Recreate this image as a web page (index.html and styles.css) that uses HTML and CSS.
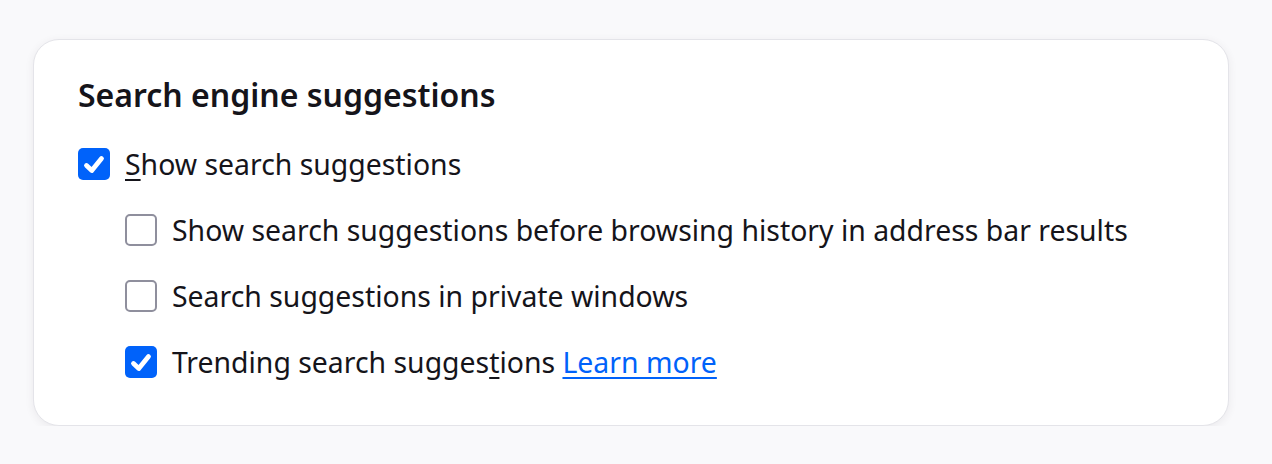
FILE: index.html
```html
<!DOCTYPE html>
<html lang="en">
<head>
<meta charset="utf-8">
<title>Search engine suggestions</title>
<link rel="stylesheet" href="styles.css">
</head>
<body>
<section class="card">
  <h2 class="card-title">Search engine suggestions</h2>
  <div class="options">
    <label class="option">
      <span class="box checked"><svg viewBox="0 0 32 32"><path d="M8.5 17.5 L13.8 22.5 L23.5 10.5"/></svg></span>
      <span class="label"><u>S</u>how search suggestions</span>
    </label>
    <label class="option nested">
      <span class="box"></span>
      <span class="label">Show search suggestions before browsing history in address bar results</span>
    </label>
    <label class="option nested">
      <span class="box"></span>
      <span class="label">Search suggestions in private windows</span>
    </label>
    <label class="option nested">
      <span class="box checked"><svg viewBox="0 0 32 32"><path d="M8.5 17.5 L13.8 22.5 L23.5 10.5"/></svg></span>
      <span class="label">Trending search sugges<u>t</u>ions <a class="link" href="#">Learn more</a></span>
    </label>
  </div>
</section>
</body>
</html>
```
FILE: styles.css
```css
html, body {
  margin: 0;
  padding: 0;
  background: #f9f9fb;
}
body {
  font-family: "Noto Sans", "DejaVu Sans", sans-serif;
  color: #15141a;
  padding: 39px 43px 0 33px;
}
.card {
  box-sizing: border-box;
  width: 1196px;
  height: 387px;
  background: #ffffff;
  border: 1px solid #e4e4e9;
  border-radius: 26px;
  box-shadow: 0 2px 8px rgba(58, 57, 68, 0.08);
  padding: 35px 44px 0 44px;
}
.card-title {
  margin: 0;
  font-size: 32px;
  line-height: 40px;
  font-weight: 600;
}
.options {
  margin-top: 33px;
  display: flex;
  flex-direction: column;
  gap: 34px;
}
.option {
  display: flex;
  align-items: center;
  gap: 15px;
  height: 32px;
  font-size: 28.4px;
  line-height: 32px;
}
.option.nested {
  margin-left: 47px;
}
.box {
  box-sizing: border-box;
  width: 32px;
  height: 32px;
  flex: none;
  border: 2px solid #8f8f9d;
  border-radius: 5px;
  background: #fff;
}
.box.checked {
  border: none;
  background: #0062fa;
}
.box svg {
  display: block;
  width: 32px;
  height: 32px;
}
.box svg path {
  fill: none;
  stroke: #fff;
  stroke-width: 4.8;
  stroke-linecap: round;
  stroke-linejoin: round;
}
.label u {
  text-decoration-thickness: 2px;
  text-underline-offset: 4px;
}
.link {
  color: #0062fa;
  text-decoration: underline;
  text-decoration-thickness: 2px;
  text-underline-offset: 4px;
}
```
